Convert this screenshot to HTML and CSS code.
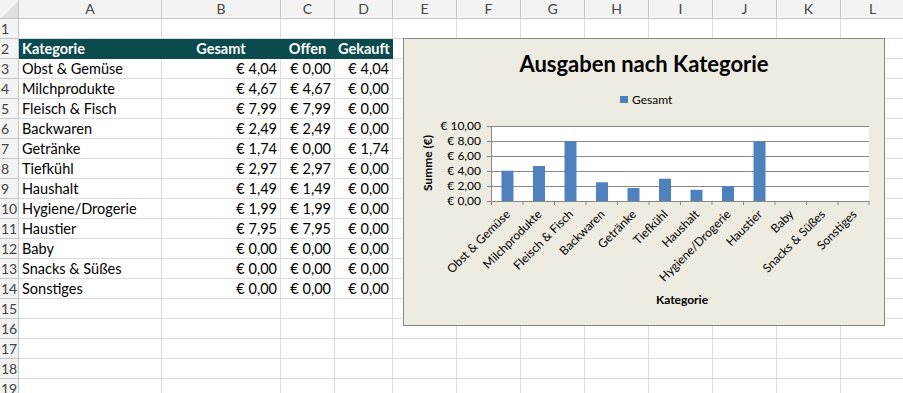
FILE: index.html
```html
<!DOCTYPE html>
<html lang="de">
<head>
    <meta charset="UTF-8">
    <meta name="viewport" content="width=device-width, initial-scale=1.0">
    <title>Ausgaben</title>
    <link rel="stylesheet" href="styles.css">
</head>
<body>
    <div class="sheet">
        <div class="row heads">
            <span class="corner"></span><span>A</span><span>B</span><span>C</span><span>D</span><span>E</span><span>F</span><span>G</span><span>H</span><span>I</span><span>J</span><span>K</span><span>L</span>
        </div>
        <div class="row"><span class="num">1</span><span></span><span></span><span></span><span></span><span></span><span></span><span></span><span></span><span></span><span></span><span></span><span></span></div>
        <div class="row title-row"><span class="num">2</span><span class="th">Kategorie</span><span class="th mid">Gesamt</span><span class="th mid">Offen</span><span class="th mid">Gekauft</span><span></span><span></span><span></span><span></span><span></span><span></span><span></span><span></span></div>
        <div class="row"><span class="num">3</span><span>Obst &amp; Gemüse</span><span class="eur">€ 4,04</span><span class="eur">€ 0,00</span><span class="eur">€ 4,04</span><span></span><span></span><span></span><span></span><span></span><span></span><span></span><span></span></div>
        <div class="row"><span class="num">4</span><span>Milchprodukte</span><span class="eur">€ 4,67</span><span class="eur">€ 4,67</span><span class="eur">€ 0,00</span><span></span><span></span><span></span><span></span><span></span><span></span><span></span><span></span></div>
        <div class="row"><span class="num">5</span><span>Fleisch &amp; Fisch</span><span class="eur">€ 7,99</span><span class="eur">€ 7,99</span><span class="eur">€ 0,00</span><span></span><span></span><span></span><span></span><span></span><span></span><span></span><span></span></div>
        <div class="row"><span class="num">6</span><span>Backwaren</span><span class="eur">€ 2,49</span><span class="eur">€ 2,49</span><span class="eur">€ 0,00</span><span></span><span></span><span></span><span></span><span></span><span></span><span></span><span></span></div>
        <div class="row"><span class="num">7</span><span>Getränke</span><span class="eur">€ 1,74</span><span class="eur">€ 0,00</span><span class="eur">€ 1,74</span><span></span><span></span><span></span><span></span><span></span><span></span><span></span><span></span></div>
        <div class="row"><span class="num">8</span><span>Tiefkühl</span><span class="eur">€ 2,97</span><span class="eur">€ 2,97</span><span class="eur">€ 0,00</span><span></span><span></span><span></span><span></span><span></span><span></span><span></span><span></span></div>
        <div class="row"><span class="num">9</span><span>Haushalt</span><span class="eur">€ 1,49</span><span class="eur">€ 1,49</span><span class="eur">€ 0,00</span><span></span><span></span><span></span><span></span><span></span><span></span><span></span><span></span></div>
        <div class="row"><span class="num">10</span><span>Hygiene/Drogerie</span><span class="eur">€ 1,99</span><span class="eur">€ 1,99</span><span class="eur">€ 0,00</span><span></span><span></span><span></span><span></span><span></span><span></span><span></span><span></span></div>
        <div class="row"><span class="num">11</span><span>Haustier</span><span class="eur">€ 7,95</span><span class="eur">€ 7,95</span><span class="eur">€ 0,00</span><span></span><span></span><span></span><span></span><span></span><span></span><span></span><span></span></div>
        <div class="row"><span class="num">12</span><span>Baby</span><span class="eur">€ 0,00</span><span class="eur">€ 0,00</span><span class="eur">€ 0,00</span><span></span><span></span><span></span><span></span><span></span><span></span><span></span><span></span></div>
        <div class="row"><span class="num">13</span><span>Snacks &amp; Süßes</span><span class="eur">€ 0,00</span><span class="eur">€ 0,00</span><span class="eur">€ 0,00</span><span></span><span></span><span></span><span></span><span></span><span></span><span></span><span></span></div>
        <div class="row"><span class="num">14</span><span>Sonstiges</span><span class="eur">€ 0,00</span><span class="eur">€ 0,00</span><span class="eur">€ 0,00</span><span></span><span></span><span></span><span></span><span></span><span></span><span></span><span></span></div>
        <div class="row"><span class="num">15</span><span></span><span></span><span></span><span></span><span></span><span></span><span></span><span></span><span></span><span></span><span></span><span></span></div>
        <div class="row"><span class="num">16</span><span></span><span></span><span></span><span></span><span></span><span></span><span></span><span></span><span></span><span></span><span></span><span></span></div>
        <div class="row"><span class="num">17</span><span></span><span></span><span></span><span></span><span></span><span></span><span></span><span></span><span></span><span></span><span></span><span></span></div>
        <div class="row"><span class="num">18</span><span></span><span></span><span></span><span></span><span></span><span></span><span></span><span></span><span></span><span></span><span></span><span></span></div>
        <div class="row"><span class="num">19</span><span></span><span></span><span></span><span></span><span></span><span></span><span></span><span></span><span></span><span></span><span></span><span></span></div>

        <!-- chart floats over the sheet like in excel -->
        <div class="chart">
            <svg width="481" height="287" viewBox="0 0 481 287">
                <text class="ctitle" x="240" y="33">Ausgaben nach Kategorie</text>

                <rect x="216" y="57" width="8" height="7" fill="#4f81bd"/>
                <text class="small" x="228" y="65">Gesamt</text>

                <rect x="87" y="87" width="378" height="75" fill="#fff"/>
                <g class="grid">
                    <line x1="83" y1="87.5" x2="465" y2="87.5"/>
                    <line x1="83" y1="102.5" x2="465" y2="102.5"/>
                    <line x1="83" y1="117.5" x2="465" y2="117.5"/>
                    <line x1="83" y1="132.5" x2="465" y2="132.5"/>
                    <line x1="83" y1="147.5" x2="465" y2="147.5"/>
                    <line x1="83" y1="162.5" x2="465" y2="162.5"/>
                    <line x1="87.5" y1="87" x2="87.5" y2="166"/>
                    <line x1="119" y1="162" x2="119" y2="166"/>
                    <line x1="150.5" y1="162" x2="150.5" y2="166"/>
                    <line x1="182" y1="162" x2="182" y2="166"/>
                    <line x1="213.5" y1="162" x2="213.5" y2="166"/>
                    <line x1="245" y1="162" x2="245" y2="166"/>
                    <line x1="276.5" y1="162" x2="276.5" y2="166"/>
                    <line x1="308" y1="162" x2="308" y2="166"/>
                    <line x1="339.5" y1="162" x2="339.5" y2="166"/>
                    <line x1="371" y1="162" x2="371" y2="166"/>
                    <line x1="402.5" y1="162" x2="402.5" y2="166"/>
                    <line x1="434" y1="162" x2="434" y2="166"/>
                    <line x1="465" y1="162" x2="465" y2="166"/>
                </g>

                <g class="ylab">
                    <text x="77" y="91">€ 10,00</text>
                    <text x="77" y="106">€ 8,00</text>
                    <text x="77" y="121">€ 6,00</text>
                    <text x="77" y="136">€ 4,00</text>
                    <text x="77" y="151">€ 2,00</text>
                    <text x="77" y="166">€ 0,00</text>
                </g>

                <g fill="#4f81bd">
                    <rect x="97.5" y="131.7" width="12" height="30.3"/>
                    <rect x="129" y="127" width="12" height="35"/>
                    <rect x="160.5" y="102.1" width="12" height="59.9"/>
                    <rect x="192" y="143.3" width="12" height="18.7"/>
                    <rect x="223.5" y="149" width="12" height="13"/>
                    <rect x="255" y="139.7" width="12" height="22.3"/>
                    <rect x="286.5" y="150.8" width="12" height="11.2"/>
                    <rect x="318" y="147.1" width="12" height="14.9"/>
                    <rect x="349.5" y="102.4" width="12" height="59.6"/>
                </g>

                <g class="xlab">
                    <text transform="translate(107,176) rotate(-45)">Obst &amp; Gemüse</text>
                    <text transform="translate(138.5,176) rotate(-45)">Milchprodukte</text>
                    <text transform="translate(170,176) rotate(-45)">Fleisch &amp; Fisch</text>
                    <text transform="translate(201.5,176) rotate(-45)">Backwaren</text>
                    <text transform="translate(233,176) rotate(-45)">Getränke</text>
                    <text transform="translate(264.5,176) rotate(-45)">Tiefkühl</text>
                    <text transform="translate(296,176) rotate(-45)">Haushalt</text>
                    <text transform="translate(327.5,176) rotate(-45)">Hygiene/Drogerie</text>
                    <text transform="translate(359,176) rotate(-45)">Haustier</text>
                    <text transform="translate(390.5,176) rotate(-45)">Baby</text>
                    <text transform="translate(422,176) rotate(-45)">Snacks &amp; Süßes</text>
                    <text transform="translate(453.5,176) rotate(-45)">Sonstiges</text>
                </g>

                <text class="axtitle" transform="translate(28,124) rotate(-90)">Summe (€)</text>
                <text class="axtitle" x="278" y="265">Kategorie</text>
            </svg>
        </div>
    </div>
</body>
</html>
```

FILE: styles.css
```css
*{
    margin: 0;
    padding: 0;
    box-sizing: border-box;
}
body{
    width: 903px;
    height: 393px;
    overflow: hidden;
    background: #fff;
    font-family: Lato, "Liberation Sans", sans-serif;
    color: #000;
}
.sheet{
    position: relative;
    width: 903px;
}
.row{
    display: grid;
    grid-template-columns: 19px 143px 119px 54px 58px repeat(8, 64px);
    height: 20px;
}
.row span{
    display: block;
    height: 20px;
    line-height: 19px;
    font-size: 14.5px;
    padding: 0 3px;
    white-space: nowrap;
    overflow: hidden;
    border-right: 1px solid #dadcdd;
    border-bottom: 1px solid #dadcdd;
}
.row .num{
    background: #f3f3f3;
    color: #444;
    font-size: 14px;
    padding: 0 0 0 1px;
    overflow: visible;
    border-color: #c6c6c6;
}
.heads{
    height: 19px;
}
.heads span{
    height: 19px;
    line-height: 18px;
    background: #f3f3f3;
    color: #444;
    font-size: 14px;
    text-align: center;
    border-color: #c6c6c6;
}
.heads .corner{
    background: linear-gradient(135deg, #f3f3f3 55%, #dfdfdf 55%);
}
.title-row .th{
    background: #0b4b4e;
    color: #fff;
    font-weight: bold;
    border-color: #0b4b4e;
}
.title-row .mid{
    text-align: center;
}
.eur{
    text-align: right;
}

.chart{
    position: absolute;
    left: 403px;
    top: 38px;
    width: 482px;
    height: 288px;
    background: #eeece1;
    border: 1px solid #868686;
}
.chart svg{
    display: block;
    font-family: Lato, "Liberation Sans", sans-serif;
}
.ctitle{
    font-size: 22px;
    font-weight: bold;
    text-anchor: middle;
}
.small{
    font-size: 12px;
}
.grid line{
    stroke: #878787;
    stroke-width: 1;
}
.ylab text{
    font-size: 12px;
    text-anchor: end;
}
.xlab text{
    font-size: 12px;
    text-anchor: end;
}
.axtitle{
    font-size: 12px;
    font-weight: bold;
    text-anchor: middle;
}
```
